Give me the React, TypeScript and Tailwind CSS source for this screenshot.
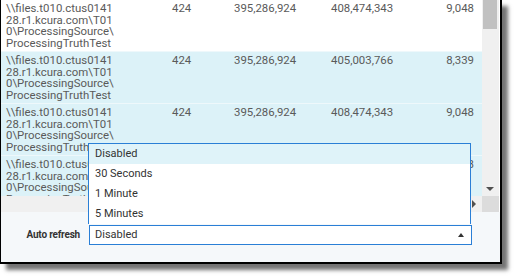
import * as React from 'react';

const rows = [
  { a: '424', b: '395,286,924', c: '408,474,343', d: '9,048', bg: 'bg-white' },
  { a: '424', b: '395,286,924', c: '405,003,766', d: '8,339', bg: 'bg-[#dcf2f8]' },
  { a: '424', b: '395,286,924', c: '408,474,343', d: '9,048', bg: 'bg-[#dcf2f8]' },
  { a: '424', b: '395,286,924', c: '408,474,343', d: '9,048', bg: 'bg-[#dcf2f8]' },
];

const options = ['Disabled', '30 Seconds', '1 Minute', '5 Minutes'];

function Row({ r }: { r: (typeof rows)[number] }) {
  return (
    <div className={`flex h-[52px] shrink-0 border-b border-[#eef8fb] pt-[3px] ${r.bg}`}>
      <div className="w-[171px] pl-[5px] leading-[11.7px]">
        <div>\\files.t010.ctus0141</div>
        <div>28.r1.kcura.com\T01</div>
        <div>0\ProcessingSource\</div>
        <div>ProcessingTruthTest</div>
      </div>
      <div className="w-[62px] leading-[11.7px]">{r.a}</div>
      <div className="w-[97px] leading-[11.7px]">{r.b}</div>
      <div className="w-[100px] leading-[11.7px]">{r.c}</div>
      <div className="flex-1 pr-[8px] text-right leading-[11.7px]">{r.d}</div>
    </div>
  );
}

export default function App() {
  return (
    <div className="relative h-[279px] w-[517px] bg-white font-['Roboto',sans-serif] text-[11.4px] text-[#5a5a5a]">
      <div className="relative flex h-[264px] w-[502px] flex-col border-b-2 border-l border-r-2 border-black bg-white shadow-[6px_6px_4px_rgba(0,0,0,0.55)]">
        {/* Grid area */}
        <div className="flex h-[212px]">
          <div className="flex w-[481px] flex-col">
            <div className="flex h-[196px] flex-col overflow-hidden">
              {rows.map((r, i) => (
                <Row key={i} r={r} />
              ))}
            </div>
            {/* horizontal scrollbar */}
            <div className="flex h-[16px] items-center justify-end bg-[#f0f0f0] pr-[6px]">
              <div className="h-0 w-0 border-y-[4px] border-l-[4px] border-y-transparent border-l-[#505050]" />
            </div>
          </div>
          <div className="flex w-[17px] flex-col">
            {/* vertical scrollbar */}
            <div className="flex flex-1 flex-col bg-[#f0f0f0] px-[1px]">
              <div className="h-[29px] w-[14px] bg-[#c1c1c1]" />
              <div className="flex-1" />
              <div className="mb-[5px] ml-[3px] h-0 w-0 border-x-[4px] border-t-[4px] border-x-transparent border-t-[#505050]" />
            </div>
            <div className="h-[16px] bg-[#dcdcdc]" />
          </div>
          <div className="flex-1 bg-white" />
        </div>
        {/* Footer */}
        <div className="flex flex-1 items-start bg-[#f5f8fa] pt-[13px] text-[11px]">
          <div className="w-[79px] pt-[2px] text-right text-[10px] font-bold tracking-[-0.2px] text-[#333]">Auto refresh</div>
          <div className="ml-[9px] flex h-[20px] w-[383px] items-center justify-between border border-[#2a7fd6] bg-white pl-[5px] pr-[7px] text-[#333]">
            <span>Disabled</span>
            <div className="h-0 w-0 border-x-[3.5px] border-b-[4px] border-x-transparent border-b-[#333]" />
          </div>
        </div>
        {/* Open dropdown list */}
        <div className="absolute left-[87px] top-[143px] flex w-[383px] flex-col border-x border-t border-[#2a7fd6] bg-white text-[11px] text-[#333]">
          {options.map((o, i) => (
            <div key={o} className={`flex h-[20px] items-center pl-[6px] ${i === 0 ? 'bg-[#dff3f9]' : ''}`}>
              {o}
            </div>
          ))}
        </div>
      </div>
    </div>
  );
}
